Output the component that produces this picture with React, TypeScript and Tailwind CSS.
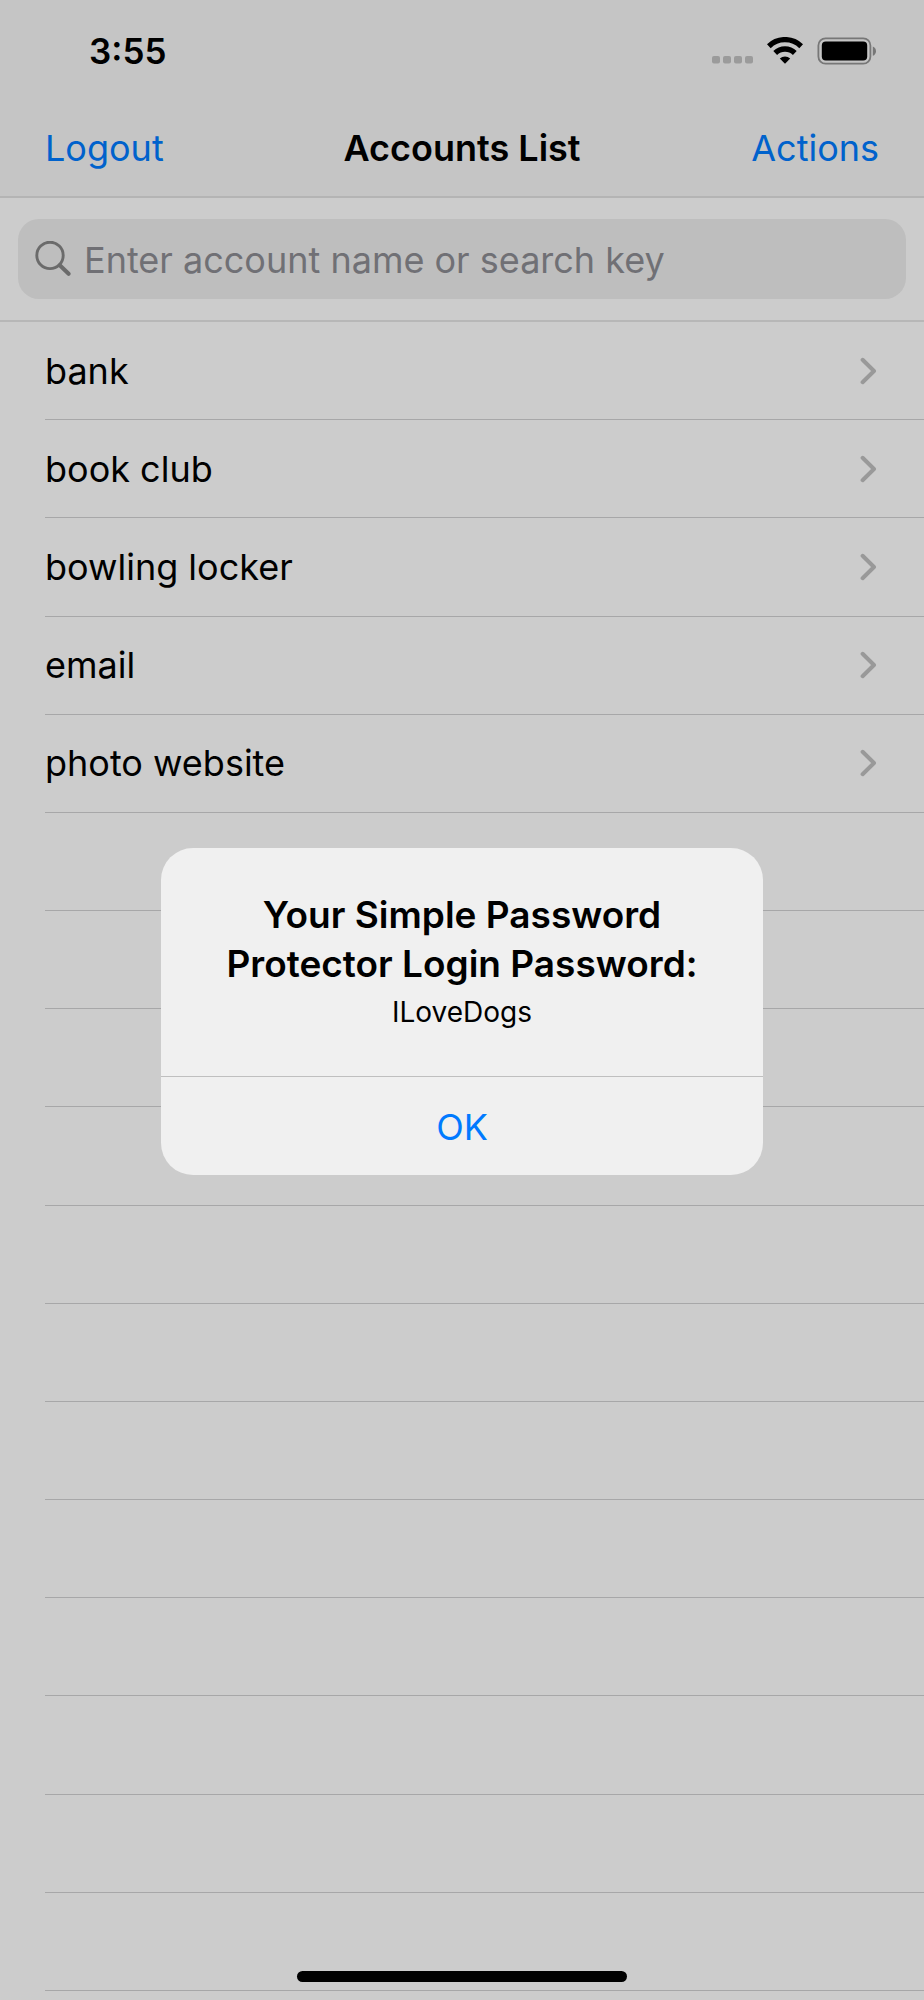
const accounts = ["bank", "book club", "bowling locker", "email", "photo website"];
const ROW_COUNT = 17;

function StatusBar() {
  return (
    <div className="flex h-[102px] items-center justify-between pr-12 pl-[89px]">
      <time className="text-[35px] leading-10 font-semibold">3:55</time>
      <div className="flex items-center gap-[14px]">
        <svg width="41" height="28" viewBox="0 0 41 28" fill="#9b9b9b" aria-hidden="true">
          <rect x="0" y="19" width="8" height="7.5" rx="2" />
          <rect x="11" y="19" width="8" height="7.5" rx="2" />
          <rect x="22" y="19" width="8" height="7.5" rx="2" />
          <rect x="33" y="19" width="8" height="7.5" rx="2" />
        </svg>
        <svg width="36" height="28" viewBox="0 0 36 28" fill="none" aria-hidden="true">
          <path d="M1.8 9.2A23.3 23.3 0 0 1 34.2 9.2" stroke="#000" strokeWidth="5.4" />
          <path d="M8.2 16A14 14 0 0 1 27.8 16" stroke="#000" strokeWidth="5.4" />
          <path d="M12.8 21.4A8 8 0 0 1 23.2 21.4L18 26.8Z" fill="#000" />
        </svg>
        <svg width="59" height="28" viewBox="0 0 59 28" fill="none" aria-hidden="true">
          <rect x="1.4" y="1.3" width="52" height="25.4" rx="7.2" stroke="#777" strokeWidth="1.8" />
          <rect x="4.8" y="4.6" width="45.4" height="18.8" rx="4" fill="#000" />
          <path d="M55.8 9.6C57.8 10.3 59 12 59 14.2S57.8 18.1 55.8 18.8Z" fill="#777" />
        </svg>
      </div>
    </div>
  );
}

function SearchIcon() {
  return (
    <svg width="36" height="36" viewBox="0 0 36 36" fill="none" stroke="#6b6b6b" aria-hidden="true">
      <circle cx="15" cy="14.4" r="13.2" strokeWidth="2.9" />
      <path d="M24.8 24.2L33.6 32.8" strokeWidth="4" strokeLinecap="round" />
    </svg>
  );
}

function Chevron() {
  return (
    <svg width="18" height="28" viewBox="0 0 18 28" fill="none" aria-hidden="true">
      <path d="M2.6 2.8L14 14L2.6 25.2" stroke="#999" strokeWidth="4" strokeLinecap="round" strokeLinejoin="round" />
    </svg>
  );
}

export default function App() {
  return (
    <div className="relative flex min-h-screen flex-col bg-[#cccccc] font-['Inter','Liberation_Sans',sans-serif] text-black">
      <header className="border-b-2 border-[#b4b4b4] bg-[#c5c5c5]">
        <StatusBar />
        <nav className="grid h-[94px] grid-cols-3 items-center px-[45px] pb-[2px] text-[36px] leading-12">
          <button type="button" className="justify-self-start text-[#0062cc]">Logout</button>
          <h1 className="justify-self-center font-semibold whitespace-nowrap">Accounts List</h1>
          <button type="button" className="justify-self-end text-[#0062cc]">Actions</button>
        </nav>
      </header>

      <div className="border-b-2 border-[#b7b7b7] px-[18px] py-[21px]">
        <label className="flex h-20 items-center gap-[13px] rounded-[21px] bg-[#bebebe] px-[17px]">
          <SearchIcon />
          <input
            type="search"
            aria-label="Search accounts"
            placeholder="Enter account name or search key"
            className="min-w-0 flex-1 bg-transparent pt-[2px] text-[36px] leading-12 outline-none placeholder:text-[#707075]"
          />
        </label>
      </div>

      <ul className="grid flex-1 auto-rows-fr pb-[9px] pl-[45px]">
        {Array.from({ length: ROW_COUNT }, (_, i) => (
          <li key={i} className="flex min-h-24 border-b border-[#a7a7a8]">
            {accounts[i] && (
              <a href={`#account-${i + 1}`} className="flex flex-1 items-center justify-between pr-[46px] text-[36px] leading-12">
                <span>{accounts[i]}</span>
                <Chevron />
              </a>
            )}
          </li>
        ))}
      </ul>

      <div className="absolute inset-x-0 bottom-[18px] flex justify-center">
        <div className="h-[11px] w-[330px] rounded-full bg-black" />
      </div>

      <div className="absolute inset-0 flex items-center justify-center pt-[22px]">
        <div
          role="alertdialog"
          aria-modal="true"
          aria-labelledby="alert-title"
          aria-describedby="alert-message"
          className="w-[602px] overflow-hidden rounded-[32px] bg-[#f0f0f0] text-center"
        >
          <div className="px-10 pt-[42px] pb-[44px]">
            <h2 id="alert-title" className="text-[37px] leading-[49px] font-semibold">
              Your Simple Password
              <br />
              Protector Login Password:
            </h2>
            <p id="alert-message" className="pt-1 text-[28px] leading-10">ILoveDogs</p>
          </div>
          <button type="button" className="h-[99px] w-full border-t border-[#bfbfbf] pt-[2px] text-[36px] leading-12 text-[#007aff]">
            OK
          </button>
        </div>
      </div>
    </div>
  );
}
